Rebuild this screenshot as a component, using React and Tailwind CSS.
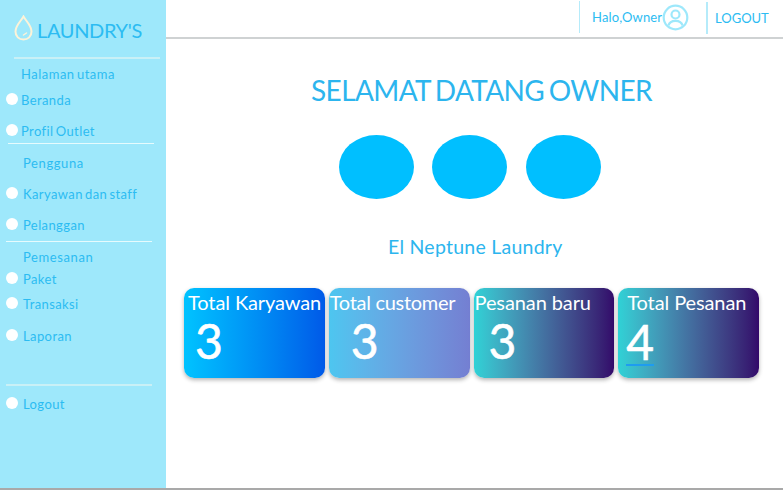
import React from 'react';

function Dot() {
  return <span className="w-3 h-3 rounded-full bg-white shrink-0 -mt-0.5" />;
}

function NavItem({ label, className = '', textClass = 'ml-[5px]' }) {
  return (
    <div className={`flex items-center pl-[6px] ${className}`}>
      <Dot />
      <span className={`text-[13px] leading-4 tracking-[0.4px] [word-spacing:-1.5px] text-[#2cbcf2] whitespace-nowrap ${textClass}`}>{label}</span>
    </div>
  );
}

function StatCard({ title, value, gradient, titlePad, valuePad, marked = false }) {
  return (
    <div className={`w-[141px] h-[90px] rounded-[10px] shadow-[0_2px_4px_rgba(0,0,0,0.3)] text-white ${gradient}`}>
      <div className={`pt-[2px] text-[20px] leading-6 tracking-[-0.1px] whitespace-nowrap ${titlePad}`}>{title}</div>
      <div className={`mt-[2px] ${valuePad}`}>
        {marked ? (
          <span className="inline-block text-[48px] leading-[44px] pt-[4px] [-webkit-text-stroke:0.6px_white] border-b-[2px] border-[#1e9cf0]">{value}</span>
        ) : (
          <span className="inline-block text-[48px] leading-[50px] [-webkit-text-stroke:0.6px_white]">{value}</span>
        )}
      </div>
    </div>
  );
}

export default function App() {
  return (
    <div className="w-[783px] h-[490px] flex flex-col bg-white overflow-hidden font-['Lato',sans-serif]">
      <div className="flex flex-1 min-h-0">
        {/* Sidebar */}
        <aside className="w-[166px] shrink-0 bg-[#9ee8fb]">
          <div className="flex pl-[14px] pt-[15px] h-[57px]">
            <svg width="19" height="26" viewBox="0 0 19 26" fill="none">
              <path d="M9.5 1.5 C7 6 1.5 10.5 1.5 16.5 C1.5 21.5 5 24.5 9.5 24.5 C14 24.5 17.5 21.5 17.5 16.5 C17.5 10.5 12 6 9.5 1.5 Z" stroke="#fdf3d8" strokeWidth="2" />
              <path d="M9.5 20 L12.5 18" stroke="#fdf3d8" strokeWidth="1.5" strokeLinecap="round" />
            </svg>
            <span className="ml-[4px] mt-[2px] text-[20px] leading-[26px] tracking-[-0.35px] text-[#2cbcf2] whitespace-nowrap">LAUNDRY'S</span>
          </div>
          <div className="ml-[14px] w-[146px] h-[2px] bg-[#c9f0f6]" />

          <div className="pl-[21px] pt-[7px] text-[13px] leading-4 tracking-[0.5px] [word-spacing:-1.5px] text-[#2cbcf2]">Halaman utama</div>
          <NavItem label="Beranda" className="mt-[10px]" textClass="ml-[3px]" />
          <NavItem label="Profil Outlet" className="mt-[15px]" textClass="ml-[3px]" />
          <div className="ml-[8px] w-[146px] h-px mt-[4px] bg-[#e6fbfd]" />

          <div className="pl-[23px] pt-[11px] text-[13px] leading-4 tracking-[0.6px] text-[#2cbcf2]">Pengguna</div>
          <NavItem label="Karyawan dan staff" className="mt-[15px]" />
          <NavItem label="Pelanggan" className="mt-[15px]" />
          <div className="ml-[6px] w-[146px] h-px mt-[8px] bg-[#e6fbfd]" />

          <div className="pl-[23px] pt-[7px] text-[13px] leading-4 tracking-[0.6px] text-[#2cbcf2]">Pemesanan</div>
          <NavItem label="Paket" className="mt-[6px]" />
          <NavItem label="Transaksi" className="mt-[9px]" />
          <NavItem label="Laporan" className="mt-[16px]" />
          <div className="ml-[6px] w-[146px] h-[2px] mt-[40px] bg-[#c9f0f6]" />
          <NavItem label="Logout" className="mt-[10px]" />
        </aside>

        {/* Main */}
        <main className="flex-1 min-w-0">
          <header className="h-[39px] border-b-2 border-[#cfd2d3] flex items-start">
            <div className="ml-[413px] mt-[1px] h-[32px] w-[1px] bg-[#b5ebfa]" />
            <div className="flex items-center ml-[12px] mt-[4px] w-[114px]">
              <span className="text-[13px] tracking-[0.15px] text-[#2cbcf2] whitespace-nowrap">Halo,Owner</span>
              <svg width="27" height="27" viewBox="0 0 27 27" fill="none" stroke="#9ee8fb" strokeWidth="2.2">
                <circle cx="13.5" cy="13.5" r="11.8" />
                <circle cx="13.5" cy="10.5" r="4" />
                <path d="M6.5 21.5 C7.5 17.5 10 16.8 13.5 16.8 C17 16.8 19.5 17.5 20.5 21.5" />
              </svg>
            </div>
            <div className="mt-[2px] h-[32px] w-[2px] bg-[#b5ebfa]" />
            <span className="ml-[7px] mt-[9px] text-[13px] leading-[18px] text-[#2cbcf2]">LOGOUT</span>
          </header>

          <h1 className="ml-[145px] mt-[33px] text-[28px] leading-[36px] tracking-[-0.6px] [word-spacing:-2px] text-[#2cb5ee] whitespace-nowrap">SELAMAT DATANG OWNER</h1>

          <div className="flex ml-[173px] mt-[27px]">
            <div className="w-[75px] h-[64px] rounded-[50%] bg-[#00bfff]" />
            <div className="w-[75px] h-[64px] rounded-[50%] bg-[#00bfff] ml-[18px]" />
            <div className="w-[75px] h-[64px] rounded-[50%] bg-[#00bfff] ml-[19px]" />
          </div>

          <div className="ml-[222px] mt-[36px] text-[19.5px] leading-6 tracking-[0.25px] text-[#2cb5ee] whitespace-nowrap">El Neptune Laundry</div>

          <div className="flex gap-[4px] ml-[18px] mt-[29px] w-[575px]">
            <StatCard title="Total Karyawan" value="3" titlePad="pl-[4px]" valuePad="pl-[11px]" gradient="bg-gradient-to-r from-[#00c3ff] to-[#0059e8]" />
            <StatCard title="Total customer" value="3" titlePad="pl-[1px] tracking-[-0.3px]" valuePad="pl-[22px]" gradient="bg-gradient-to-r from-[#4dc6f0] to-[#747fd2]" />
            <StatCard title="Pesanan baru" value="3" titlePad="pl-[1px]" valuePad="pl-[15px]" gradient="bg-gradient-to-r from-[#2fd2d6] to-[#33086a]" />
            <StatCard title="Total Pesanan" value="4" titlePad="pl-[9px]" valuePad="pl-[8px]" gradient="bg-gradient-to-r from-[#2fd2d6] to-[#33086a]" marked />
          </div>
        </main>
      </div>
      <div className="h-[2px] bg-[#a9a9a9]" />
    </div>
  );
}
